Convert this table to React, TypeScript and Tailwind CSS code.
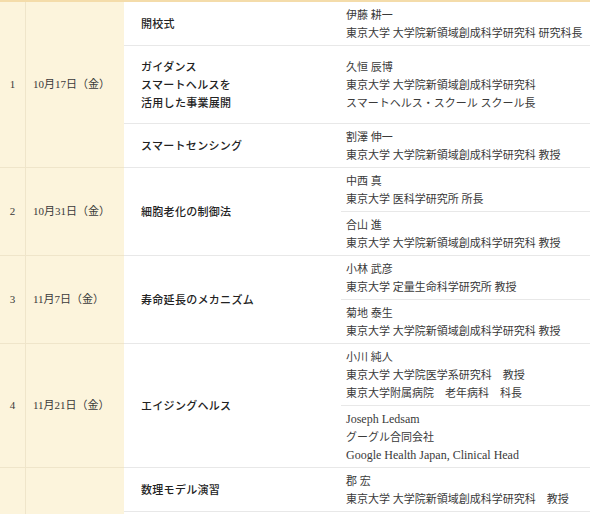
import React from "react";

const FONT = "font-['Liberation_Serif','Noto_Sans_CJK_JP',serif]";

type Line = string | { latin: string };

function Speaker({ lines }: { lines: Line[] }) {
  return (
    <div className="flex-1 pl-[5px] py-[3.5px] flex flex-col justify-center text-[#3a3a3a] border-b border-[#e8e8e8]">
      {lines.map((l, i) =>
        typeof l === "string" ? (
          <div key={i} className="leading-[18px] whitespace-nowrap">
            {l}
          </div>
        ) : (
          <div key={i} className="leading-[18px] whitespace-nowrap text-[12px]">
            {l.latin}
          </div>
        )
      )}
    </div>
  );
}

function Title({ lines }: { lines: string[] }) {
  return (
    <div className="w-[217px] shrink-0 pl-[17px] flex flex-col justify-center border-b border-[#e8e8e8] text-[#222] font-medium">
      {lines.map((l, i) => (
        <div key={i} className="leading-[18px] tracking-[0.3px]">
          {l}
        </div>
      ))}
    </div>
  );
}

function Session({
  num,
  date,
  children,
}: {
  num: string;
  date: string;
  children: React.ReactNode;
}) {
  return (
    <div className="flex">
      <div className="w-[26px] shrink-0 bg-[#fcf4dc] border-r border-b border-[#efe5ca] flex items-center justify-center text-[#3a3a3a]">
        {num}
      </div>
      <div className="w-[98px] shrink-0 bg-[#fcf4dc] border-b border-[#efe5ca] flex items-center pl-[7px] text-[#3a3a3a] whitespace-nowrap">
        {date}
      </div>
      <div className="flex-1 flex flex-col min-w-0">{children}</div>
    </div>
  );
}

export default function App() {
  return (
    <div className={`w-[590px] h-[514px] overflow-hidden bg-white text-[11px] ${FONT}`}>
      <div className="border-t-2 border-[#f4dcaa]">
        <Session num="1" date="10月17日（金）">
          <div className="flex">
            <Title lines={["開校式"]} />
            <div className="flex-1 flex flex-col">
              <Speaker lines={["伊藤 耕一", "東京大学 大学院新領域創成科学研究科 研究科長"]} />
            </div>
          </div>
          <div className="flex h-[78px]">
            <Title lines={["ガイダンス", "スマートヘルスを", "活用した事業展開"]} />
            <div className="flex-1 flex flex-col">
              <Speaker
                lines={[
                  "久恒 辰博",
                  "東京大学 大学院新領域創成科学研究科",
                  "スマートヘルス・スクール スクール長",
                ]}
              />
            </div>
          </div>
          <div className="flex">
            <Title lines={["スマートセンシング"]} />
            <div className="flex-1 flex flex-col">
              <Speaker lines={["割澤 伸一", "東京大学 大学院新領域創成科学研究科 教授"]} />
            </div>
          </div>
        </Session>
        <Session num="2" date="10月31日（金）">
          <div className="flex">
            <Title lines={["細胞老化の制御法"]} />
            <div className="flex-1 flex flex-col">
              <Speaker lines={["中西 真", "東京大学 医科学研究所 所長"]} />
              <Speaker lines={["合山 進", "東京大学 大学院新領域創成科学研究科 教授"]} />
            </div>
          </div>
        </Session>
        <Session num="3" date="11月7日（金）">
          <div className="flex">
            <Title lines={["寿命延長のメカニズム"]} />
            <div className="flex-1 flex flex-col">
              <Speaker lines={["小林 武彦", "東京大学 定量生命科学研究所 教授"]} />
              <Speaker lines={["菊地 泰生", "東京大学 大学院新領域創成科学研究科 教授"]} />
            </div>
          </div>
        </Session>
        <Session num="4" date="11月21日（金）">
          <div className="flex">
            <Title lines={["エイジングヘルス"]} />
            <div className="flex-1 flex flex-col">
              <Speaker
                lines={["小川 純人", "東京大学 大学院医学系研究科　教授", "東京大学附属病院　老年病科　科長"]}
              />
              <Speaker
                lines={[
                  { latin: "Joseph Ledsam" },
                  "グーグル合同会社",
                  { latin: "Google Health Japan, Clinical Head" },
                ]}
              />
            </div>
          </div>
        </Session>
        <Session num="" date="">
          <div className="flex">
            <Title lines={["数理モデル演習"]} />
            <div className="flex-1 flex flex-col">
              <Speaker lines={["郡 宏", "東京大学 大学院新領域創成科学研究科　教授"]} />
            </div>
          </div>
          <div className="flex h-[40px]">
            <div className="w-[217px]" />
            <div className="flex-1" />
          </div>
        </Session>
      </div>
    </div>
  );
}
